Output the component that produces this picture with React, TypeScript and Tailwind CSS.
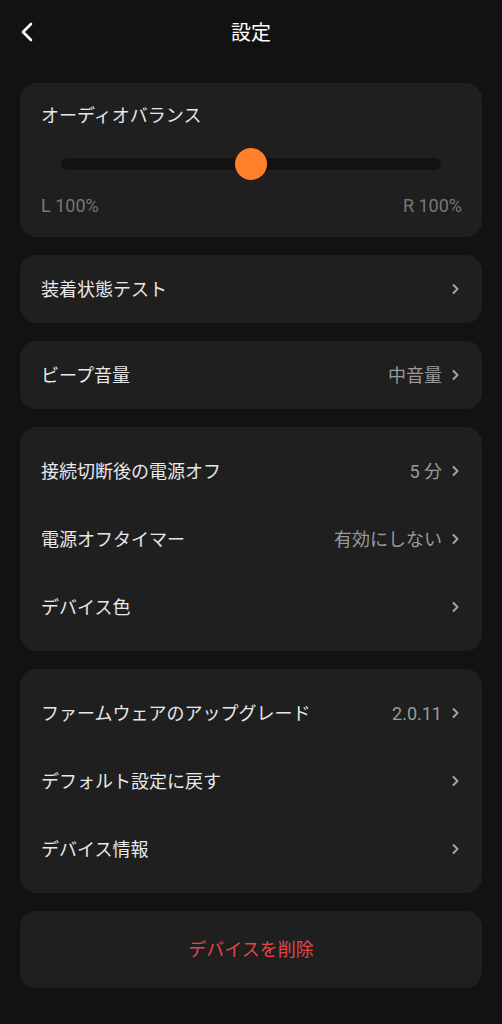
import React from "react"

const font = { fontFamily: 'Roboto, "Noto Sans CJK JP", "Noto Sans", sans-serif' }

function Chevron() {
    return (
        <svg width="9" height="12" viewBox="0 0 9 12" fill="none" className="shrink-0">
            <path d="M2.5 2 L6.5 6 L2.5 10" stroke="#a3a3a3" strokeWidth="2" strokeLinecap="round" strokeLinejoin="round" />
        </svg>
    )
}

interface RowProps {
    label: string
    value?: string
}

function Row({ label, value }: RowProps) {
    return (
        <div className="h-[68px] flex items-center justify-between pl-[21px] pr-[22px]">
            <span className="text-[18px] text-[#e8e8e8]">{label}</span>
            <div className="flex items-center gap-[9px]">
                {value && <span className="text-[18px] text-[#9a9a9a]">{value}</span>}
                <Chevron />
            </div>
        </div>
    )
}

function Card({ children, className = "" }: { children: React.ReactNode; className?: string }) {
    return <div className={"bg-[#1f1f1f] rounded-[16px] " + className}>{children}</div>
}

export default function App() {
    return (
        <div className="w-[502px] h-[1024px] bg-[#121212] overflow-hidden" style={font}>
            {/* Header */}
            <div className="relative h-[66px] flex items-center justify-center">
                <svg width="14" height="22" viewBox="0 0 14 22" fill="none" className="absolute left-[20px] top-[21px]">
                    <path d="M11 3 L3 11 L11 19" stroke="#ffffff" strokeWidth="2.6" strokeLinecap="round" strokeLinejoin="round" />
                </svg>
                <span className="text-[20px] text-white">設定</span>
            </div>

            <div className="px-[20px] pt-[17px] flex flex-col gap-[18px]">
                {/* Audio balance */}
                <Card className="h-[154px] px-[21px] pt-[20px]">
                    <div className="text-[18px] text-[#e8e8e8] leading-[26px]">オーディオバランス</div>
                    <div className="relative mx-[20px] mt-[29px] h-[12px] rounded-full bg-[#121212]">
                        <div className="absolute left-1/2 top-1/2 -translate-x-1/2 -translate-y-1/2 w-[32px] h-[32px] rounded-full bg-[#ff7f2a]" />
                    </div>
                    <div className="mt-[22px] flex justify-between text-[18px] text-[#777777]">
                        <span>L 100%</span>
                        <span className="mr-[-1px]">R 100%</span>
                    </div>
                </Card>

                <Card>
                    <Row label="装着状態テスト" />
                </Card>

                <Card>
                    <Row label="ビープ音量" value="中音量" />
                </Card>

                <Card className="py-[10px]">
                    <Row label="接続切断後の電源オフ" value="5 分" />
                    <Row label="電源オフタイマー" value="有効にしない" />
                    <Row label="デバイス色" />
                </Card>

                <Card className="py-[10px]">
                    <Row label="ファームウェアのアップグレード" value="2.0.11" />
                    <Row label="デフォルト設定に戻す" />
                    <Row label="デバイス情報" />
                </Card>

                <Card className="h-[77px] flex items-center justify-center">
                    <span className="text-[18px] text-[#e0484d]">デバイスを削除</span>
                </Card>
            </div>
        </div>
    )
}
